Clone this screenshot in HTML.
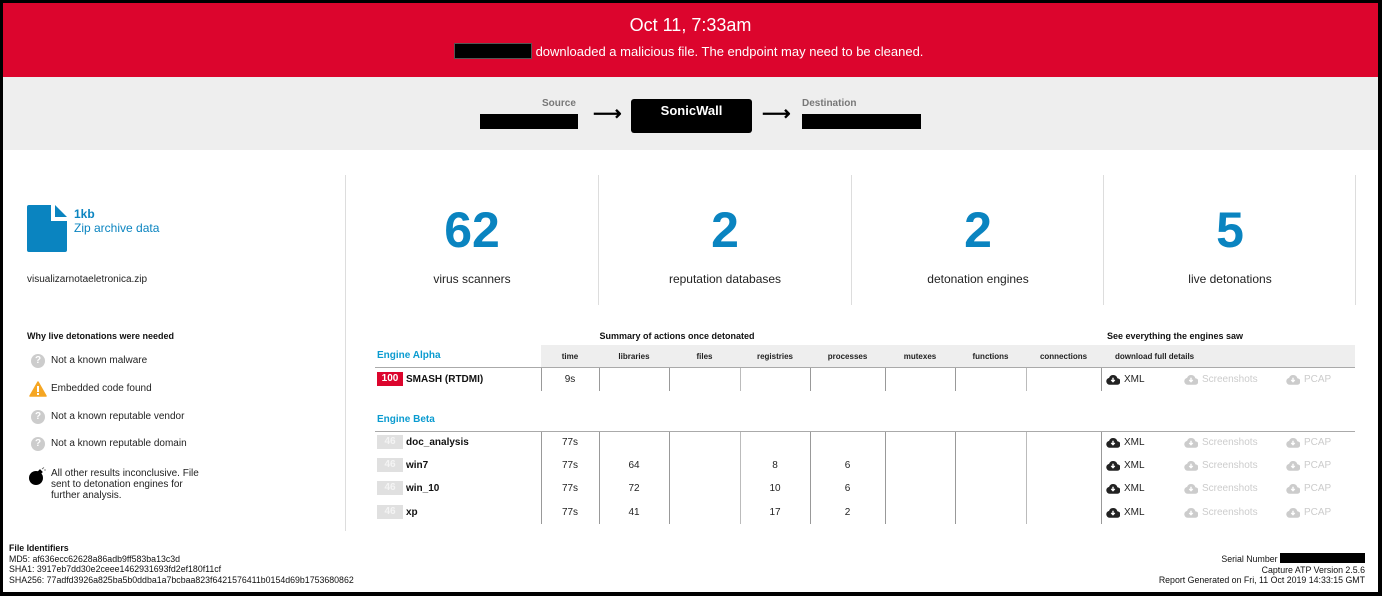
<!DOCTYPE html>
<html><head><meta charset="utf-8"><style>
*{margin:0;padding:0;box-sizing:border-box}
body{width:1382px;height:596px;background:#000;font-family:"Liberation Sans",Arial,sans-serif;position:relative;overflow:hidden}
.page{position:absolute;left:3px;top:3px;width:1375px;height:589px;background:#fff;overflow:hidden}
.a{position:absolute}
.red{left:0;top:0;width:1375px;height:74px;background:#dc052d;color:#fff;text-align:center}
.grey{left:0;top:74px;width:1375px;height:73px;background:#eeeeee}
.blk{background:#000;position:absolute}
.big{font-size:50px;font-weight:bold;color:#0a84c0;text-align:center;width:252px}
.lbl{font-size:12px;color:#222;text-align:center;width:252px}
.vl{position:absolute;width:1px;background:#ddd}
.hdr{font-size:8px;font-weight:bold;color:#222;text-align:center;top:349px}
.cell{font-size:10px;color:#222;text-align:center}
.badge{position:absolute;left:374px;width:26px;height:14px;font-size:10px;font-weight:bold;color:#fff;text-align:center;line-height:14px}
.nm{position:absolute;left:403px;font-size:10px;font-weight:bold;color:#111}
.dl{position:absolute;font-size:10px;display:flex;align-items:center;gap:4px}
.why{position:absolute;left:48px;font-size:10px;color:#222}
.q{position:absolute;left:28px;width:14px;height:14px;border-radius:50%;background:#ccc;color:#fff;font-size:10px;font-weight:bold;text-align:center;line-height:14px}
</style></head><body>
<div class="page">
<div class="a red">
 <div style="position:absolute;top:12px;width:100%;font-size:18px">Oct 11, 7:33am</div>
 <div style="position:absolute;top:41px;width:100%;font-size:13px;padding-left:78px">downloaded a malicious file. The endpoint may need to be cleaned.</div>
 <div class="blk" style="left:451px;top:40px;width:78px;height:16px;border:1px solid #555"></div>
</div>
<div class="a grey">
 <div class="a" style="left:539px;top:21px;font-size:10px;font-weight:bold;color:#777">Source</div>
 <div class="blk" style="left:477px;top:37px;width:98px;height:15px"></div>
 <div class="a" style="left:590px;top:24px;font-size:20px;color:#000;font-weight:bold">&#10230;</div>
 <div class="blk" style="left:628px;top:22px;width:121px;height:34px;border-radius:3px;color:#fff;font-size:13px;font-weight:bold;text-align:center;padding-top:4px">SonicWall</div>
 <div class="a" style="left:759px;top:24px;font-size:20px;color:#000;font-weight:bold">&#10230;</div>
 <div class="a" style="left:799px;top:21px;font-size:10px;font-weight:bold;color:#777">Destination</div>
 <div class="blk" style="left:799px;top:37px;width:119px;height:15px"></div>
</div>

<svg class="a" style="left:24px;top:202px" width="42" height="47" viewBox="0 0 42 47"><path d="M2 0H24V16H40V45a2 2 0 0 1-2 2H2a2 2 0 0 1-2-2V2a2 2 0 0 1 2-2z" fill="#0a84c0"/><path d="M28 0L40 12H28z" fill="#0a84c0"/></svg>
<div class="a" style="left:71px;top:204px;font-size:12px;font-weight:bold;color:#0a84c0">1kb</div>
<div class="a" style="left:71px;top:218px;font-size:12px;color:#0a84c0">Zip archive data</div>
<div class="a" style="left:24px;top:271px;font-size:10px;color:#222">visualizarnotaeletronica.zip</div>
<div class="a" style="left:24px;top:328px;font-size:9px;font-weight:bold;color:#111">Why live detonations were needed</div>
<div class="q" style="top:351px">?</div><div class="why" style="top:352px">Not a known malware</div>
<svg class="a" style="left:26px;top:378px" width="18" height="16"><path d="M9 1L17 15H1z" fill="#f5a623" stroke="#f5a623" stroke-linejoin="round" stroke-width="1.5"/><rect x="8" y="5" width="2" height="6" fill="#fff"/><rect x="8" y="12" width="2" height="2" fill="#fff"/></svg>
<div class="why" style="top:380px">Embedded code found</div>
<div class="q" style="top:407px">?</div><div class="why" style="top:408px">Not a known reputable vendor</div>
<div class="q" style="top:434px">?</div><div class="why" style="top:435px">Not a known reputable domain</div>
<svg class="a" style="left:25px;top:463px" width="20" height="20"><circle cx="8" cy="12" r="7" fill="#000"/><rect x="10" y="4" width="4" height="4" fill="#000" transform="rotate(45 12 6)"/><path d="M14 3l2-1.5M16 4l2 0" stroke="#666" stroke-width="0.8"/></svg>
<div class="why" style="top:465px;line-height:11px">All other results inconclusive. File<br>sent to detonation engines for<br>further analysis.</div>
<div class="vl" style="left:342px;top:172px;height:356px"></div>

<div class="vl" style="left:595px;top:172px;height:130px"></div>
<div class="vl" style="left:848px;top:172px;height:130px"></div>
<div class="vl" style="left:1100px;top:172px;height:130px"></div>
<div class="vl" style="left:1352px;top:172px;height:130px"></div>
<div class="a big" style="left:343px;top:198px">62</div><div class="a lbl" style="left:343px;top:269px">virus scanners</div>
<div class="a big" style="left:596px;top:198px">2</div><div class="a lbl" style="left:596px;top:269px">reputation databases</div>
<div class="a big" style="left:849px;top:198px">2</div><div class="a lbl" style="left:849px;top:269px">detonation engines</div>
<div class="a big" style="left:1101px;top:198px">5</div><div class="a lbl" style="left:1101px;top:269px">live detonations</div>

<div class="a" style="left:538px;top:328px;width:272px;text-align:center;font-size:9px;font-weight:bold;color:#111">Summary of actions once detonated</div>
<div class="a" style="left:1104px;top:328px;font-size:9px;font-weight:bold;color:#111">See everything the engines saw</div>
<div class="a" style="left:538px;top:342px;width:814px;height:22px;background:#eee"></div>
<div class="a" style="left:372px;top:364px;width:980px;height:1px;background:#aaa"></div>
<div class="a" style="left:372px;top:428px;width:980px;height:1px;background:#aaa"></div>
<div class="a" style="left:374px;top:347px;font-size:10px;font-weight:bold;color:#0a9bd0">Engine Alpha</div>
<div class="a" style="left:374px;top:411px;font-size:10px;font-weight:bold;color:#0a9bd0">Engine Beta</div>
<div class="a hdr" style="left:538px;width:58px">time</div>
<div class="a hdr" style="left:596px;width:70px">libraries</div>
<div class="a hdr" style="left:666px;width:71px">files</div>
<div class="a hdr" style="left:737px;width:70px">registries</div>
<div class="a hdr" style="left:807px;width:75px">processes</div>
<div class="a hdr" style="left:882px;width:70px">mutexes</div>
<div class="a hdr" style="left:952px;width:71px">functions</div>
<div class="a hdr" style="left:1023px;width:75px">connections</div>
<div class="a hdr" style="left:1112px">download full details</div>
<div class="vl" style="left:538px;top:365px;height:23px;background:#999"></div><div class="vl" style="left:538px;top:429px;height:92px;background:#999"></div>
<div class="vl" style="left:596px;top:365px;height:23px;background:#999"></div><div class="vl" style="left:596px;top:429px;height:92px;background:#999"></div>
<div class="vl" style="left:666px;top:365px;height:23px;background:#999"></div><div class="vl" style="left:666px;top:429px;height:92px;background:#999"></div>
<div class="vl" style="left:737px;top:365px;height:23px;background:#bbb"></div><div class="vl" style="left:737px;top:429px;height:92px;background:#bbb"></div>
<div class="vl" style="left:807px;top:365px;height:23px;background:#999"></div><div class="vl" style="left:807px;top:429px;height:92px;background:#999"></div>
<div class="vl" style="left:882px;top:365px;height:23px;background:#999"></div><div class="vl" style="left:882px;top:429px;height:92px;background:#999"></div>
<div class="vl" style="left:952px;top:365px;height:23px;background:#999"></div><div class="vl" style="left:952px;top:429px;height:92px;background:#999"></div>
<div class="vl" style="left:1023px;top:365px;height:23px;background:#bbb"></div><div class="vl" style="left:1023px;top:429px;height:92px;background:#bbb"></div>
<div class="vl" style="left:1098px;top:365px;height:23px;background:#999"></div><div class="vl" style="left:1098px;top:429px;height:92px;background:#999"></div>

<div class="badge" style="top:369px;background:#dc052d">100</div><div class="nm" style="top:371px">SMASH (RTDMI)</div>
<div class="a cell" style="left:538px;width:58px;top:371px">9s</div>

<div class="badge" style="top:432px;background:#e0e0e0;color:#f4f4f4">46</div><div class="nm" style="top:434px">doc_analysis</div>
<div class="badge" style="top:455px;background:#e0e0e0;color:#f4f4f4">46</div><div class="nm" style="top:457px">win7</div>
<div class="badge" style="top:478px;background:#e0e0e0;color:#f4f4f4">46</div><div class="nm" style="top:480px">win_10</div>
<div class="badge" style="top:502px;background:#e0e0e0;color:#f4f4f4">46</div><div class="nm" style="top:504px">xp</div>
<div class="a cell" style="left:538px;width:58px;top:434px">77s</div>
<div class="a cell" style="left:538px;width:58px;top:457px">77s</div>
<div class="a cell" style="left:538px;width:58px;top:480px">77s</div>
<div class="a cell" style="left:538px;width:58px;top:504px">77s</div>
<div class="a cell" style="left:596px;width:70px;top:457px">64</div>
<div class="a cell" style="left:596px;width:70px;top:480px">72</div>
<div class="a cell" style="left:596px;width:70px;top:504px">41</div>
<div class="a cell" style="left:737px;width:70px;top:457px">8</div>
<div class="a cell" style="left:737px;width:70px;top:480px">10</div>
<div class="a cell" style="left:737px;width:70px;top:504px">17</div>
<div class="a cell" style="left:807px;width:75px;top:457px">6</div>
<div class="a cell" style="left:807px;width:75px;top:480px">6</div>
<div class="a cell" style="left:807px;width:75px;top:504px">2</div>

<svg width="0" height="0" style="position:absolute"><defs><symbol id="cl" viewBox="0 0 16 12"><path d="M4 12a4 4 0 0 1-.5-7.9A5 5 0 0 1 13 4.5 3.7 3.7 0 0 1 12.5 12z"/><path d="M8 4v4M6 6.5L8 8.5 10 6.5" stroke="#fff" stroke-width="1.6" fill="none"/></symbol></defs></svg>
<div class="dl" style="left:1103px;top:371px;color:#222"><svg width="14" height="11" fill="#222"><use href="#cl"/></svg>XML</div>
<div class="dl" style="left:1181px;top:371px;color:#ccc"><svg width="14" height="11" fill="#ccc"><use href="#cl"/></svg>Screenshots</div>
<div class="dl" style="left:1283px;top:371px;color:#ccc"><svg width="14" height="11" fill="#ccc"><use href="#cl"/></svg>PCAP</div>
<div class="dl" style="left:1103px;top:434px;color:#222"><svg width="14" height="11" fill="#222"><use href="#cl"/></svg>XML</div>
<div class="dl" style="left:1181px;top:434px;color:#ccc"><svg width="14" height="11" fill="#ccc"><use href="#cl"/></svg>Screenshots</div>
<div class="dl" style="left:1283px;top:434px;color:#ccc"><svg width="14" height="11" fill="#ccc"><use href="#cl"/></svg>PCAP</div>
<div class="dl" style="left:1103px;top:457px;color:#222"><svg width="14" height="11" fill="#222"><use href="#cl"/></svg>XML</div>
<div class="dl" style="left:1181px;top:457px;color:#ccc"><svg width="14" height="11" fill="#ccc"><use href="#cl"/></svg>Screenshots</div>
<div class="dl" style="left:1283px;top:457px;color:#ccc"><svg width="14" height="11" fill="#ccc"><use href="#cl"/></svg>PCAP</div>
<div class="dl" style="left:1103px;top:480px;color:#222"><svg width="14" height="11" fill="#222"><use href="#cl"/></svg>XML</div>
<div class="dl" style="left:1181px;top:480px;color:#ccc"><svg width="14" height="11" fill="#ccc"><use href="#cl"/></svg>Screenshots</div>
<div class="dl" style="left:1283px;top:480px;color:#ccc"><svg width="14" height="11" fill="#ccc"><use href="#cl"/></svg>PCAP</div>
<div class="dl" style="left:1103px;top:504px;color:#222"><svg width="14" height="11" fill="#222"><use href="#cl"/></svg>XML</div>
<div class="dl" style="left:1181px;top:504px;color:#ccc"><svg width="14" height="11" fill="#ccc"><use href="#cl"/></svg>Screenshots</div>
<div class="dl" style="left:1283px;top:504px;color:#ccc"><svg width="14" height="11" fill="#ccc"><use href="#cl"/></svg>PCAP</div>

<div class="a" style="left:6px;top:540px;font-size:8.8px;line-height:10.5px;color:#111"><b>File Identifiers</b><br>MD5: af636ecc62628a86adb9ff583ba13c3d<br>SHA1: 3917eb7dd30e2ceee1462931693fd2ef180f11cf<br>SHA256: 77adfd3926a825ba5b0ddba1a7bcbaa823f6421576411b0154d69b1753680862</div>
<div class="a" style="right:13px;top:550px;font-size:8.8px;line-height:10.5px;color:#111;text-align:right">Serial Number <span style="display:inline-block;width:85px;height:10px;background:#000;vertical-align:-1px"></span><br>Capture ATP Version 2.5.6<br>Report Generated on Fri, 11 Oct 2019 14:33:15 GMT</div>
</div>
</body></html>
